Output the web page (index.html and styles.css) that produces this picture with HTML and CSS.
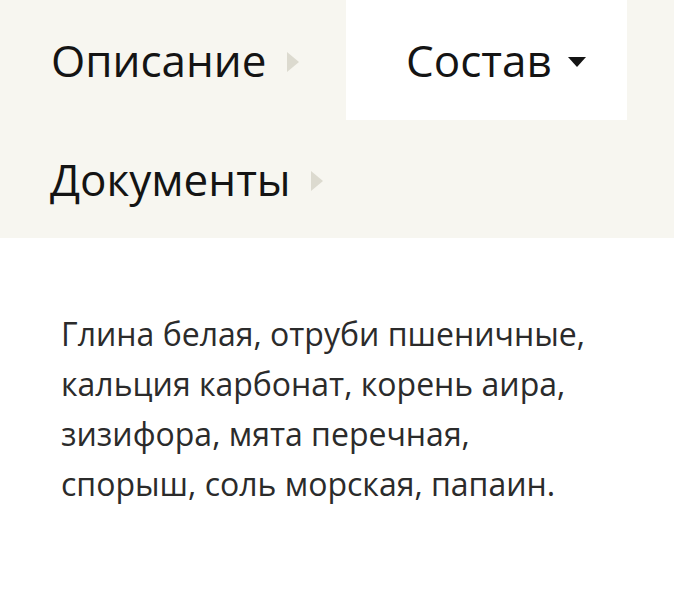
FILE: index.html
```html
<!DOCTYPE html>
<html lang="ru">
<head>
<meta charset="utf-8">
<link rel="stylesheet" href="styles.css">
</head>
<body>
<nav class="tabs">
  <div class="tab tab-first">Описание<span class="arrow arrow-right"></span></div>
  <div class="tab tab-active">Состав<span class="arrow arrow-down"></span></div>
  <div class="tab tab-docs">Документы<span class="arrow arrow-right"></span></div>
</nav>
<section class="content">
  <p class="text">Глина белая, отруби пшеничные, кальция карбонат, корень аира, зизифора, мята перечная, спорыш, соль морская, папаин.</p>
</section>
</body>
</html>
```
FILE: styles.css
```css
html, body {
  margin: 0;
  padding: 0;
  background: #ffffff;
}
body {
  font-family: "Open Sans", "DejaVu Sans", sans-serif;
  width: 674px;
}
.tabs {
  display: flex;
  flex-wrap: wrap;
  background: #f7f6f0;
  height: 238px;
}
.tab {
  height: 120px;
  display: flex;
  align-items: center;
  font-size: 44px;
  color: #141414;
  box-sizing: border-box;
}
.tab-first {
  padding-left: 51px;
  width: 346px;
}
.tab-active {
  background: #ffffff;
  width: 281px;
  padding-left: 60px;
}
.tab-docs {
  padding-left: 50px;
  height: 118px;
}
.arrow {
  display: inline-block;
  width: 0;
  height: 0;
}
.arrow-right {
  margin-left: 20px;
  margin-top: 4px;
  border-top: 10px solid transparent;
  border-bottom: 10px solid transparent;
  border-left: 12px solid #dcdacf;
}
.arrow-down {
  margin-left: 16px;
  margin-top: 4px;
  border-left: 9px solid transparent;
  border-right: 9px solid transparent;
  border-top: 10px solid #141414;
}
.content {
  padding: 71px 0 0 61px;
}
.text {
  margin: 0;
  width: 530px;
  font-size: 32px;
  line-height: 50px;
  color: #2b2b2b;
}
```
